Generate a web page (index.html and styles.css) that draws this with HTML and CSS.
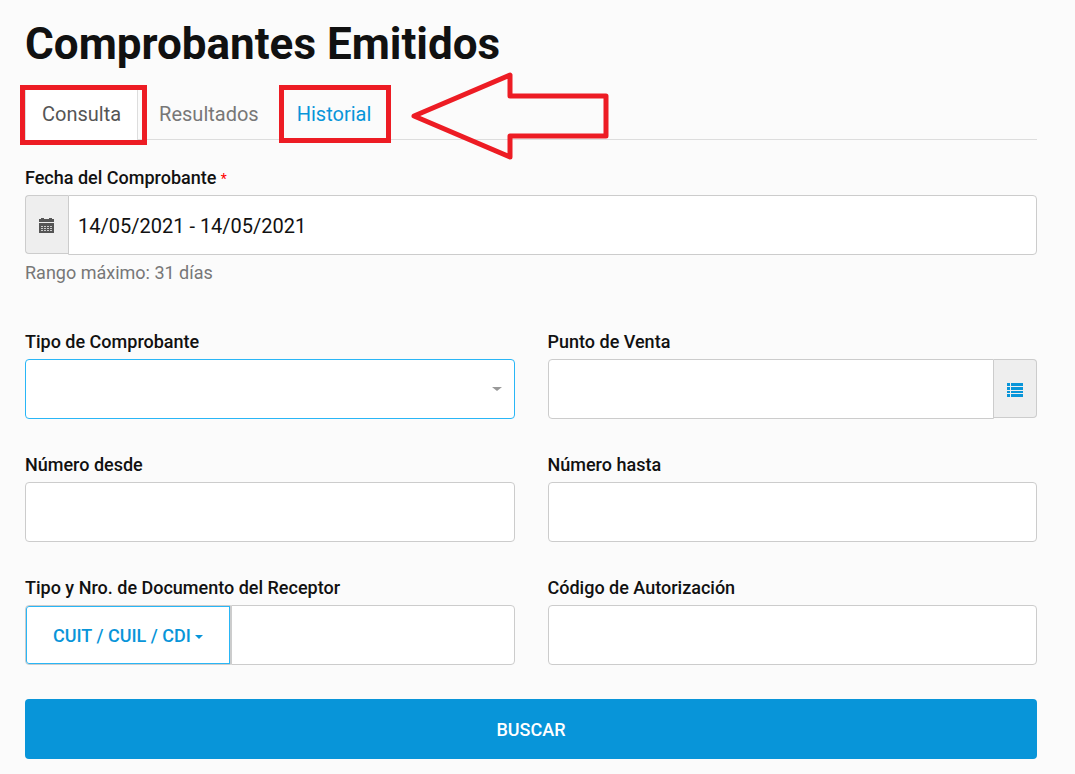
FILE: index.html
```html
<!DOCTYPE html>
<html lang="es">
  <head>
    <meta charset="utf-8">
    <meta name="viewport" content="width=device-width, initial-scale=1.0">
    <title>Comprobantes Emitidos</title>
    <link rel="stylesheet" href="styles.css">
  </head>
  <body>
    <main class="page">
      <h1 class="title">Comprobantes Emitidos</h1>

      <nav class="tabs">
        <a class="tab active" href="#consulta">Consulta<span class="mark mark-consulta"></span></a>
        <a class="tab disabled" href="#resultados">Resultados</a>
        <a class="tab" href="#historial">Historial<span class="mark mark-historial"></span></a>
        <svg class="arrow" width="200" height="90" viewBox="0 0 200 90" aria-hidden="true">
          <path d="M3 45 L99 4 V25 H195 V65 H99 V86 Z" fill="none" stroke="#ed1c24" stroke-width="5" stroke-linejoin="round"/>
        </svg>
      </nav>

      <form class="form">
        <div class="field wide">
          <label for="fecha">Fecha del Comprobante <span class="required">*</span></label>
          <div class="group">
            <span class="addon addon-left">
              <svg width="15" height="15" viewBox="0 0 15 15" aria-hidden="true">
                <path d="M0 1h2V0h3v1h5V0h3v1h2v3H0z M0 5h15v10H0z" fill="#555"/>
                <path d="M2 8.500h12M2 10.500h12M2 12.500h12" stroke="#ccc" stroke-width="1" stroke-dasharray="2 1"/>
              </svg>
            </span>
            <input class="control" id="fecha" type="text" value="14/05/2021 - 14/05/2021">
          </div>
          <p class="help">Rango máximo: 31 días</p>
        </div>

        <div class="field">
          <label for="tipo">Tipo de Comprobante</label>
          <div class="select">
            <select class="control" id="tipo">
              <option></option>
            </select>
            <span class="caret caret-select"></span>
          </div>
        </div>

        <div class="field">
          <label for="punto">Punto de Venta</label>
          <div class="group">
            <input class="control" id="punto" type="text">
            <button class="addon addon-right" type="button" aria-label="Puntos de venta">
              <svg width="16" height="14" viewBox="0 0 16 14" aria-hidden="true">
                <path d="M0 0h3v3H0z M4 0h12v3H4z M0 4h3v3H0z M4 4h12v3H4z M0 8h3v2H0z M4 8h12v2H4z M0 11h3v3H0z M4 11h12v3H4z" fill="#0895d9"/>
              </svg>
            </button>
          </div>
        </div>

        <div class="field">
          <label for="desde">Número desde</label>
          <input class="control" id="desde" type="text">
        </div>

        <div class="field">
          <label for="hasta">Número hasta</label>
          <input class="control" id="hasta" type="text">
        </div>

        <div class="field">
          <label for="documento">Tipo y Nro. de Documento del Receptor</label>
          <div class="group">
            <button class="doc-type" type="button">CUIT / CUIL / CDI <span class="caret"></span></button>
            <input class="control" id="documento" type="text">
          </div>
        </div>

        <div class="field">
          <label for="codigo">Código de Autorización</label>
          <input class="control" id="codigo" type="text">
        </div>

        <button class="submit wide" type="submit">BUSCAR</button>
      </form>
    </main>
  </body>
</html>
```

FILE: styles.css
```css
* {
  box-sizing: border-box;
}
body {
  margin: 0;
  background: #fbfbfb;
  color: #111;
  font-family: Roboto, "Liberation Sans", sans-serif;
  font-size: 18px;
  line-height: 24px;
}
.page {
  padding: 16px 38px 15px 25px;
}
.title {
  margin: 0 0 14px;
  font-size: 44px;
  line-height: 56px;
  font-weight: 700;
}

/* tabs */
.tabs {
  position: relative;
  display: flex;
  gap: 4px;
  border-bottom: 1px solid #ddd;
}
.tab {
  position: relative;
  margin-bottom: -1px;
  padding: 15px 16px 14px;
  border: 1px solid transparent;
  border-bottom: 0;
  border-radius: 4px 4px 0 0;
  color: #0895d9;
  font-size: 20px;
  text-decoration: none;
}
.tab.active {
  background: #fff;
  border-color: #ddd;
  color: #555;
}
.tab.disabled {
  color: #777;
}

/* red marks drawn over the tabs */
.mark {
  position: absolute;
  border: 5px solid #ed1c24;
}
.mark-consulta {
  top: -2px;
  right: -10px;
  bottom: -5px;
  left: -6px;
}
.mark-historial {
  top: -2px;
  right: -4px;
  bottom: -3px;
  left: -2px;
}
.arrow {
  position: absolute;
  top: -15px;
  left: 386px;
}

/* form */
.form {
  display: grid;
  grid-template-columns: 1fr 1fr;
  gap: 34px 33px;
  padding-top: 26px;
}
.wide {
  grid-column: 1 / -1;
}
.field label {
  display: block;
  margin-bottom: 5px;
  font-weight: 500;
}
.required {
  color: #f00;
  font-size: 14px;
  line-height: 1;
  font-weight: 400;
}
.help {
  margin: 6px 0 11px;
  color: #777;
}
.control {
  display: block;
  width: 100%;
  min-width: 0;
  height: 60px;
  padding: 2px 9px 0;
  border: 1px solid #ccc;
  border-radius: 4px;
  background: #fff;
  color: #111;
  font: inherit;
  font-size: 20px;
}
.group {
  display: flex;
}
.group .control {
  flex: 1;
}
.group .control:not(:first-child) {
  border-top-left-radius: 0;
  border-bottom-left-radius: 0;
}
.group .control:not(:last-child) {
  border-top-right-radius: 0;
  border-bottom-right-radius: 0;
}
.addon {
  display: flex;
  flex: none;
  align-items: center;
  justify-content: center;
  width: 43px;
  height: 59px;
  padding: 2px 0 0;
  border: 1px solid #ccc;
  background: #eee;
}
.addon-left {
  padding-right: 2px;
  border-right: 0;
  border-radius: 4px 0 0 4px;
}
.addon-right {
  border-left: 0;
  border-radius: 0 4px 4px 0;
}
.select {
  position: relative;
}
.select .control {
  appearance: none;
  border-color: #29b6f6;
}
.caret {
  display: inline-block;
  border: 4px solid transparent;
  border-top-color: currentColor;
  border-bottom: 0;
  vertical-align: middle;
}
.caret-select {
  position: absolute;
  top: 28px;
  right: 13px;
  border-width: 4px 5px 0;
  color: #999;
}
.doc-type {
  flex: none;
  padding: 2px 27px 0;
  border: 1px solid #ccc;
  border-radius: 4px 0 0 4px;
  background: #fff;
  box-shadow: inset 0 0 0 1px #29b6f6;
  color: #0895d9;
  font: inherit;
  font-weight: 500;
}
.submit {
  height: 60px;
  padding: 2px 0 0;
  border: 0;
  border-radius: 4px;
  background: #0895d9;
  color: #fff;
  font: inherit;
  font-weight: 500;
}
```
